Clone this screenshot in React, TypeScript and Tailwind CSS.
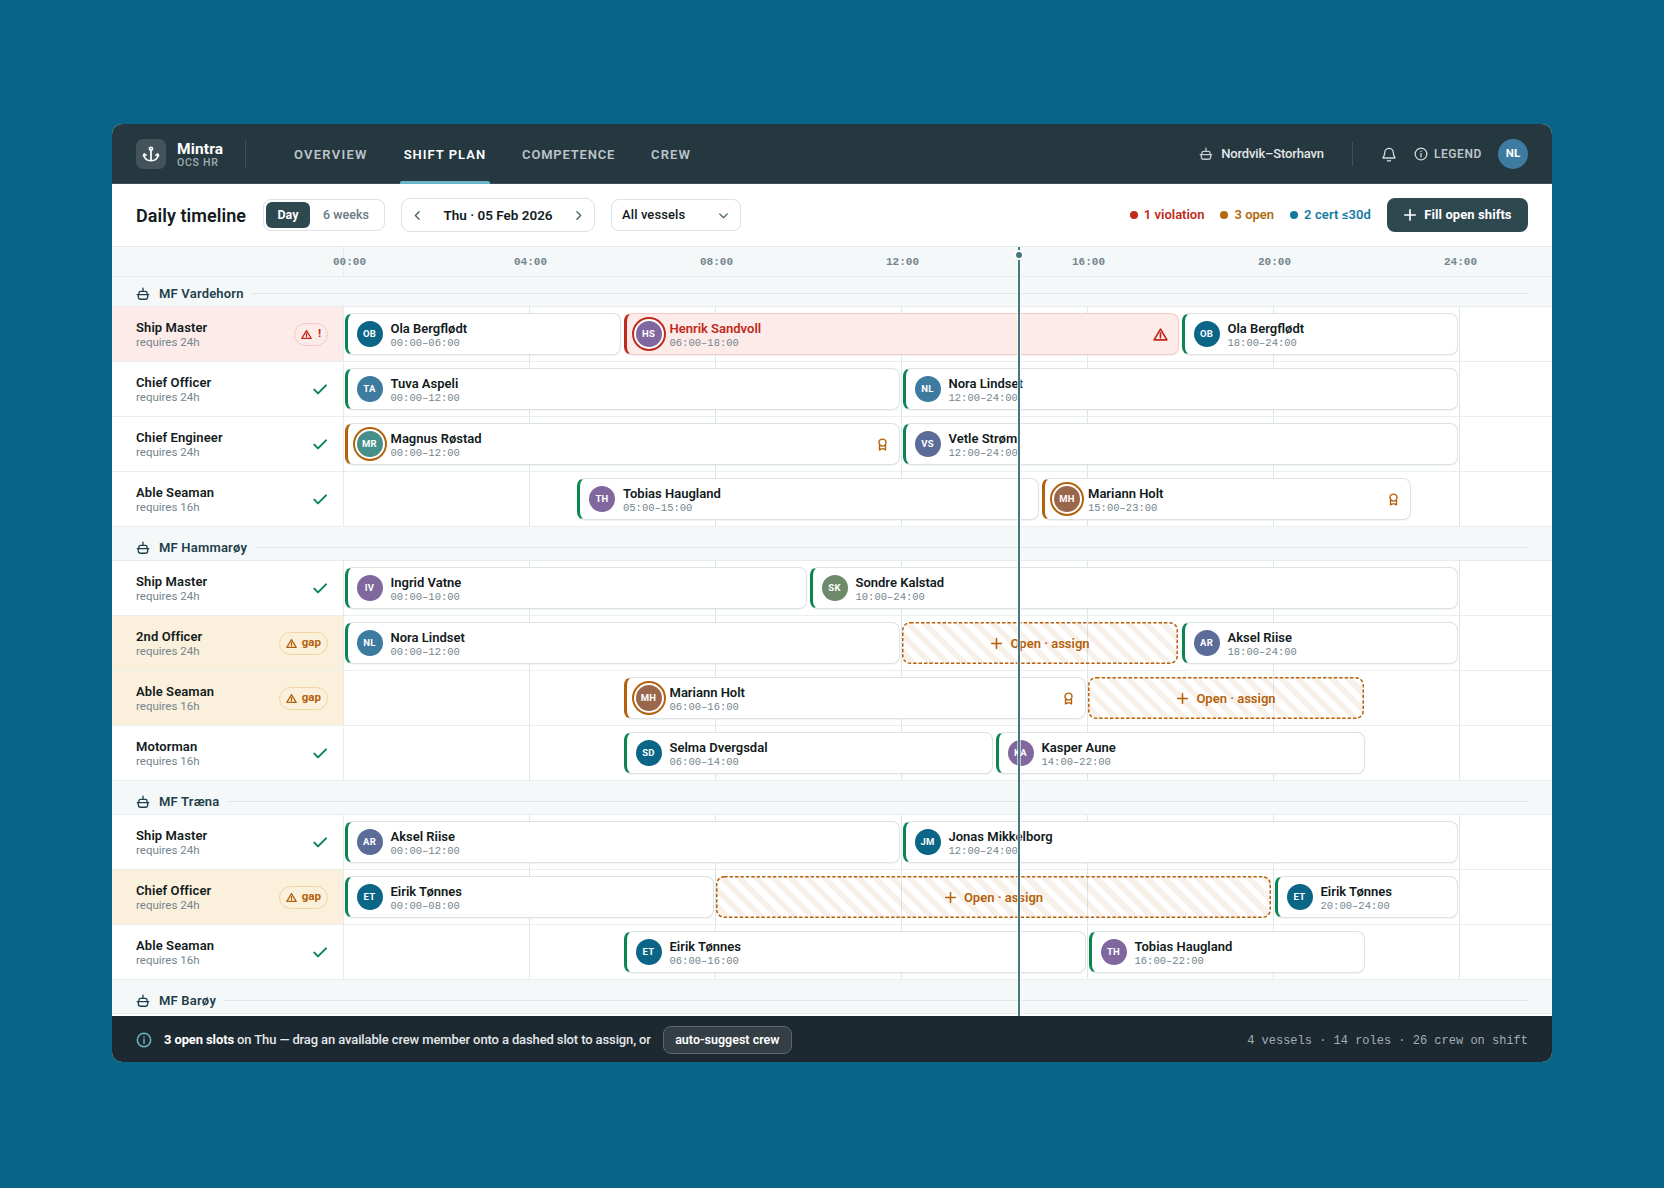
import { ReactNode } from "react";

type Status = "ok" | "cert" | "violation" | "open";

interface Shift {
  name?: string;
  start: number;
  end: number;
  status?: Status;
}

interface Role {
  title: string;
  hours: number;
  state?: "gap" | "violation";
  shifts: Shift[];
}

interface Vessel {
  name: string;
  roles: Role[];
}

const AVATAR_COLORS: Record<string, string> = {
  "Ola Bergflødt": "bg-[#0a6587]",
  "Henrik Sandvoll": "bg-[#80689f]",
  "Tuva Aspeli": "bg-[#3d7ba1]",
  "Nora Lindset": "bg-[#3d7ba1]",
  "Magnus Røstad": "bg-[#458e89]",
  "Vetle Strøm": "bg-[#5b6c99]",
  "Tobias Haugland": "bg-[#80689f]",
  "Mariann Holt": "bg-[#9a674d]",
  "Ingrid Vatne": "bg-[#80689f]",
  "Sondre Kalstad": "bg-[#6d8a6b]",
  "Aksel Riise": "bg-[#5b6c99]",
  "Selma Dvergsdal": "bg-[#0a6587]",
  "Kasper Aune": "bg-[#80689f]",
  "Jonas Mikkelborg": "bg-[#0a6587]",
  "Eirik Tønnes": "bg-[#0a6587]",
};

const VESSELS: Vessel[] = [
  {
    name: "MF Vardehorn",
    roles: [
      {
        title: "Ship Master",
        hours: 24,
        state: "violation",
        shifts: [
          { name: "Ola Bergflødt", start: 0, end: 6 },
          { name: "Henrik Sandvoll", start: 6, end: 18, status: "violation" },
          { name: "Ola Bergflødt", start: 18, end: 24 },
        ],
      },
      {
        title: "Chief Officer",
        hours: 24,
        shifts: [
          { name: "Tuva Aspeli", start: 0, end: 12 },
          { name: "Nora Lindset", start: 12, end: 24 },
        ],
      },
      {
        title: "Chief Engineer",
        hours: 24,
        shifts: [
          { name: "Magnus Røstad", start: 0, end: 12, status: "cert" },
          { name: "Vetle Strøm", start: 12, end: 24 },
        ],
      },
      {
        title: "Able Seaman",
        hours: 16,
        shifts: [
          { name: "Tobias Haugland", start: 5, end: 15 },
          { name: "Mariann Holt", start: 15, end: 23, status: "cert" },
        ],
      },
    ],
  },
  {
    name: "MF Hammarøy",
    roles: [
      {
        title: "Ship Master",
        hours: 24,
        shifts: [
          { name: "Ingrid Vatne", start: 0, end: 10 },
          { name: "Sondre Kalstad", start: 10, end: 24 },
        ],
      },
      {
        title: "2nd Officer",
        hours: 24,
        state: "gap",
        shifts: [
          { name: "Nora Lindset", start: 0, end: 12 },
          { start: 12, end: 18, status: "open" },
          { name: "Aksel Riise", start: 18, end: 24 },
        ],
      },
      {
        title: "Able Seaman",
        hours: 16,
        state: "gap",
        shifts: [
          { name: "Mariann Holt", start: 6, end: 16, status: "cert" },
          { start: 16, end: 22, status: "open" },
        ],
      },
      {
        title: "Motorman",
        hours: 16,
        shifts: [
          { name: "Selma Dvergsdal", start: 6, end: 14 },
          { name: "Kasper Aune", start: 14, end: 22 },
        ],
      },
    ],
  },
  {
    name: "MF Træna",
    roles: [
      {
        title: "Ship Master",
        hours: 24,
        shifts: [
          { name: "Aksel Riise", start: 0, end: 12 },
          { name: "Jonas Mikkelborg", start: 12, end: 24 },
        ],
      },
      {
        title: "Chief Officer",
        hours: 24,
        state: "gap",
        shifts: [
          { name: "Eirik Tønnes", start: 0, end: 8 },
          { start: 8, end: 20, status: "open" },
          { name: "Eirik Tønnes", start: 20, end: 24 },
        ],
      },
      {
        title: "Able Seaman",
        hours: 16,
        shifts: [
          { name: "Eirik Tønnes", start: 6, end: 16 },
          { name: "Tobias Haugland", start: 16, end: 22 },
        ],
      },
    ],
  },
  { name: "MF Barøy", roles: [] },
];

const clock = (h: number) => `${String(h).padStart(2, "0")}:00`;
const initials = (name: string) => name.split(" ").map((p) => p[0]).join("");

function Icon({ size, width = 2, className = "", children }: { size: number; width?: number; className?: string; children: ReactNode }) {
  return (
    <svg
      width={size}
      height={size}
      viewBox="0 0 24 24"
      fill="none"
      stroke="currentColor"
      strokeWidth={width}
      strokeLinecap="round"
      strokeLinejoin="round"
      className={`shrink-0 ${className}`}
    >
      {children}
    </svg>
  );
}

const ShipIcon = ({ className }: { className?: string }) => (
  <Icon size={14} width={2.3} className={className}>
    <path d="M12 2v5.500M5 13v-2.500a3 3 0 0 1 3-3h8a3 3 0 0 1 3 3V13M2 13h20M4 13v4a4 4 0 0 0 4 4h8a4 4 0 0 0 4-4v-4" />
  </Icon>
);

const WarnIcon = ({ size }: { size: number }) => (
  <Icon size={size} width={2.7}>
    <path d="M12 3.500 1.800 20.500h20.400L12 3.500ZM12 9.500v7.500" />
  </Icon>
);

const InfoIcon = ({ size, className }: { size: number; className?: string }) => (
  <Icon size={size} width={2.2} className={className}>
    <circle cx="12" cy="12" r="10" />
    <path d="M12 11v6M12 7.200v.3" />
  </Icon>
);

const AwardIcon = () => (
  <Icon size={13} width={2.6} className="text-[#b4610b]">
    <circle cx="12" cy="8.500" r="6.500" />
    <path d="M6.500 13.500V22l3.300-2h4.400l3.300 2v-8.500" />
  </Icon>
);

const PlusIcon = ({ size }: { size: number }) => (
  <Icon size={size} width={2.8}>
    <path d="M12 3v18M3 12h18" />
  </Icon>
);

function Avatar({ name, ring }: { name: string; ring?: string }) {
  return (
    <span
      className={`flex size-[26px] shrink-0 items-center justify-center rounded-full pt-px text-[9.5px] font-bold tracking-[0.3px] text-white ${AVATAR_COLORS[name]} ${ring ?? ""}`}
    >
      {initials(name)}
    </span>
  );
}

function ShiftBlock({ shift }: { shift: Shift }) {
  const { name, start, end, status = "ok" } = shift;
  const gridColumn = `${start + 1} / ${end + 1}`;

  if (status === "open" || !name) {
    return (
      <div
        style={{ gridColumn }}
        className="relative row-start-1 mr-[3px] flex items-center justify-center gap-[7px] rounded-lg bg-[repeating-linear-gradient(45deg,transparent_0_6px,rgba(180,97,11,0.09)_6px_12px)] pt-px text-[13px] font-semibold text-[#b4610b]"
      >
        {/* Dashed outline */}
        <svg className="absolute inset-0 size-full" fill="none" stroke="currentColor" strokeWidth="1.5" strokeDasharray="3.4 2">
          <rect x="0.75" y="0.75" rx="7.5" className="h-[calc(100%-1.5px)] w-[calc(100%-1.5px)]" />
        </svg>
        <PlusIcon size={13} />
        Open · assign
      </div>
    );
  }

  const skin = {
    ok: "border-[#dbe3e5] border-l-[#0b8550] bg-white",
    cert: "border-[#dbe3e5] border-l-[#b4610b] bg-white",
    violation: "border-[#f3cac5] border-l-[#bf2a1c] bg-[#fcebe9]",
    open: "",
  }[status];
  const ring = {
    ok: "",
    cert: "shadow-[0_0_0_2px_#fff,0_0_0_4px_#b4610b]",
    violation: "shadow-[0_0_0_2px_#fff,0_0_0_4px_#bf2a1c]",
    open: "",
  }[status];

  return (
    <div
      style={{ gridColumn }}
      className={`row-start-1 mr-[2.5px] ml-[0.5px] flex min-w-0 items-center gap-2 rounded-lg border border-l-[3px] pr-[10px] pl-[9px] shadow-[0_1px_1px_rgba(30,50,60,0.06)] ${skin}`}
    >
      <Avatar name={name} ring={ring} />
      <div className="min-w-0 flex-1 pt-[2px]">
        <div className={`text-[13px] leading-[15px] font-semibold whitespace-nowrap ${status === "violation" ? "text-[#bf2a1c]" : "text-[#121b20]"}`}>
          {name}
        </div>
        <div className="font-['Liberation_Mono',monospace] text-[10.5px] leading-[14px] text-[#73858d]">
          {clock(start)}–{clock(end)}
        </div>
      </div>
      {status === "cert" && <AwardIcon />}
      {status === "violation" && (
        <span className="text-[#bf2a1c]">
          <WarnIcon size={15} />
        </span>
      )}
    </div>
  );
}

function RoleRow({ role }: { role: Role }) {
  const tint = role.state === "violation" ? "bg-[#fcebe9]" : role.state === "gap" ? "bg-[#fbf0dc]" : "bg-white";

  return (
    <div className="flex h-[55px] shrink-0 border-b border-[#e9eeef]">
      <div className={`flex w-[232px] shrink-0 items-center justify-between border-r border-[#e6ecee] pr-[15px] pl-6 ${tint}`}>
        <div className="pt-px">
          <div className="text-[13px] leading-[16px] font-semibold tracking-[0.1px] text-[#121b20]">{role.title}</div>
          <div className="text-[11.5px] leading-[13px] text-[#73858d]">requires {role.hours}h</div>
        </div>
        {!role.state && (
          <Icon size={16} width={3} className="text-[#0b8550]">
            <path d="M3.500 13l5.500 5.500L21 6.500" />
          </Icon>
        )}
        {role.state === "gap" && (
          <span className="flex h-[23px] items-center gap-[5px] rounded-full border border-[#f0d6a2] px-[6px] text-[11.5px] font-bold text-[#b4610b]">
            <WarnIcon size={11} />
            gap
          </span>
        )}
        {role.state === "violation" && (
          <span className="flex h-[23px] items-center gap-[6px] rounded-full border border-[#f3cac5] px-[6px] text-[11.5px] font-bold text-[#bf2a1c]">
            <WarnIcon size={11} />
            !
          </span>
        )}
      </div>
      <div className="grid flex-1 grid-cols-[repeat(24,46.5px)] bg-[linear-gradient(to_left,#dfe6e8_1px,transparent_1px)] bg-[length:186px_100%] py-[6px]">
        {role.shifts.map((s) => (
          <ShiftBlock key={s.start} shift={s} />
        ))}
      </div>
    </div>
  );
}

function VesselHeader({ name, first }: { name: string; first: boolean }) {
  return (
    <div className={`flex shrink-0 items-center border-b border-[#e6ecee] bg-[#f4f8f9] px-6 text-[#1f3f4b] ${first ? "h-[30px] pt-[3px]" : "h-[34px] pt-[7px]"}`}>
      <ShipIcon className="mt-[2px]" />
      <span className="ml-[9px] pt-[2px] text-[13px] font-semibold tracking-[0.2px]">{name}</span>
      <span className="ml-2 h-px flex-1 bg-[#e1e8ea]" />
    </div>
  );
}

function Stat({ dot, text, children }: { dot: string; text: string; children: ReactNode }) {
  return (
    <span className={`flex items-center gap-[6px] text-[13px] font-semibold ${text}`}>
      <span className={`size-2 rounded-full ${dot}`} />
      {children}
    </span>
  );
}

function TopBar() {
  return (
    <header className="flex h-[60px] shrink-0 items-center border-b border-[#3d4f57] bg-[#25373f] px-6 text-white">
      <span className="flex size-[30px] items-center justify-center rounded-[7px] bg-[#44535a]">
        <Icon size={18} width={2.3}>
          <circle cx="12" cy="5" r="2" />
          <path d="M12 7v14M2.500 13c.7 5 4.500 8 9.500 8s8.800-3 9.500-8M2 14.500l1-2.500 2.500 1.500M22 14.500 21 12l-2.500 1.500" />
        </Icon>
      </span>
      <div className="ml-[11px] w-[68px] pt-[2px]">
        <div className="text-[15.5px] leading-[16px] font-bold tracking-[0.15px]">Mintra</div>
        <div className="text-[10.5px] leading-[12px] font-medium tracking-[0.75px] text-[#a3adb1]">OCS HR</div>
      </div>
      <span className="h-[30px] w-px bg-[#3d4f57]" />
      <nav className="ml-[44px] flex h-full gap-7 text-[13px] font-semibold tracking-[0.9px] text-[#bdc5c8]">
        <a className="flex items-center px-1 pt-[2px] tracking-[1.25px]">OVERVIEW</a>
        <a className="relative flex items-center px-1 pt-[2px] tracking-[1px] text-white">
          SHIFT PLAN
          <span className="absolute inset-x-0 -bottom-px h-[3px] rounded-t-[2px] bg-[#6cb4c8]" />
        </a>
        <a className="flex items-center px-1 pt-[2px] tracking-[0.8px]">COMPETENCE</a>
        <a className="flex items-center px-1 pt-[2px] tracking-[1.1px]">CREW</a>
      </nav>
      <div className="ml-auto flex items-center">
        <ShipIcon className="text-[#c4cbce]" />
        <span className="ml-2 pt-px text-[13px] font-medium tracking-[-0.15px] text-[#e2e6e8]">Nordvik–Storhavn</span>
        <span className="ml-7 h-6 w-px bg-[#3d4f57]" />
        <Icon size={16} width={2} className="ml-7 text-[#d3d8da]">
          <path d="M5.500 10a6.500 6.500 0 0 1 13 0c0 5 2.500 6.500 2.500 8H3c0-1.500 2.500-3 2.500-8ZM9.800 21.500a2.600 2.600 0 0 0 4.400 0" />
        </Icon>
        <InfoIcon size={14} className="ml-[17px] text-[#d3d8da]" />
        <span className="ml-[6px] pt-px text-xs font-semibold tracking-[0.6px] text-[#bdc5c8]">LEGEND</span>
        <span className="ml-4 flex size-[30px] items-center justify-center rounded-full bg-[#3d7ba1] pt-px text-[11.5px] font-bold">NL</span>
      </div>
    </header>
  );
}

function Toolbar() {
  return (
    <div className="flex h-[63px] shrink-0 items-center border-b border-[#e6ecee] bg-white px-6">
      <h1 className="text-[18px] font-semibold tracking-[0.05px] text-[#121b20]">Daily timeline</h1>
      <div className="ml-[17px] flex h-8 w-[122px] items-center rounded-lg border border-[#dbe3e5] p-[2px] text-[12.5px]">
        <span className="flex h-[26px] w-[44px] items-center justify-center rounded-md bg-[#2e4850] font-bold text-white">Day</span>
        <span className="flex-1 text-center font-medium tracking-[0.05px] text-[#667a83]">6 weeks</span>
      </div>
      <div className="ml-4 flex h-[34px] w-[194px] items-center justify-between rounded-[9px] border border-[#dbe3e5] px-[9px] text-[#44606b]">
        <Icon size={13} width={2.4}>
          <path d="M15 5l-7 7 7 7" />
        </Icon>
        <span className="text-[13.5px] font-semibold text-[#121b20]">Thu · 05 Feb 2026</span>
        <Icon size={13} width={2.4}>
          <path d="M9 5l7 7-7 7" />
        </Icon>
      </div>
      <div className="ml-4 flex h-8 w-[130px] items-center justify-between rounded-lg border border-[#dbe3e5] px-[10px] text-[#44606b]">
        <span className="text-[13px] font-medium tracking-[0.1px] text-[#121b20]">All vessels</span>
        <Icon size={13} width={2.4}>
          <path d="M5 9l7 7 7-7" />
        </Icon>
      </div>
      <div className="ml-auto flex items-center gap-4">
        <Stat dot="bg-[#bf2a1c]" text="text-[#bf2a1c]">1 violation</Stat>
        <Stat dot="bg-[#b06a0c]" text="text-[#b06a0c]">3 open</Stat>
        <Stat dot="bg-[#137a9f]" text="text-[#137a9f] tracking-[0.1px]">2 cert ≤30d</Stat>
        <button className="flex h-[34px] w-[141px] items-center justify-center gap-[7px] rounded-lg bg-[#2e4850] text-[13px] font-bold tracking-[0.08px] text-white">
          <PlusIcon size={14} />
          Fill open shifts
        </button>
      </div>
    </div>
  );
}

function Axis() {
  return (
    <div className="flex h-[30px] shrink-0 border-b border-[#e6ecee] bg-[#f4f8f9]">
      <div className="w-[232px] shrink-0 border-r border-[#e6ecee]" />
      <div className="grid flex-1 grid-cols-[repeat(26,46.5px)] items-center pt-[2px] font-['Liberation_Mono',monospace] text-[11px] font-bold text-[#73858d]">
        {[0, 4, 8, 12, 16, 20, 24].map((h) => (
          <span
            key={h}
            style={{ gridColumn: `${h + 1} / span 2` }}
            className={`row-start-1 w-[33px] ${h === 0 ? "ml-[-11px]" : "ml-[-16px]"}`}
          >
            {clock(h)}
          </span>
        ))}
      </div>
    </div>
  );
}

export default function App() {
  return (
    <div className="flex h-[1188px] w-[1664px] items-start justify-center bg-[#086587] pt-[124px] font-[Roboto,'Liberation_Sans',sans-serif]">
      <div className="flex h-[938px] w-[1440px] flex-col overflow-hidden rounded-[10px] bg-white">
        <TopBar />
        <Toolbar />
        <div className="relative flex min-h-0 flex-1 flex-col overflow-hidden">
          <Axis />
          {VESSELS.map((v, i) => (
            <div key={v.name} className="flex shrink-0 flex-col">
              <VesselHeader name={v.name} first={i === 0} />
              {v.roles.map((r) => (
                <RoleRow key={r.title} role={r} />
              ))}
            </div>
          ))}
          {/* Current time marker */}
          <div className="absolute inset-y-0 left-[906px] w-[2px] bg-[#457682] shadow-[0_0_0_1px_rgba(255,255,255,0.6)]">
            <span className="absolute top-[5px] -left-[2px] size-[6px] rounded-full bg-[#457682] shadow-[0_0_0_2px_#fff]" />
          </div>
        </div>
        <footer className="flex h-[46px] shrink-0 items-center bg-[#1c2930] px-6 text-[13px] text-[#e4e8ea]">
          <InfoIcon size={16} className="mt-px text-[#6cb4c8]" />
          <span className="ml-3 pt-[2px] font-medium tracking-[-0.12px]">
            <b className="font-bold text-white">3 open slots</b> on Thu — drag an available crew member onto a dashed slot to assign, or
          </span>
          <button className="mt-px ml-3 flex h-7 w-[129px] items-center justify-center rounded-lg border border-[#5a676d] bg-[#333f45] pt-px text-[12.5px] font-semibold text-white">
            auto-suggest crew
          </button>
          <span className="ml-auto pt-[3px] font-['Liberation_Mono',monospace] text-xs text-[#a3adb1]">
            4 vessels · 14 roles · 26 crew on shift
          </span>
        </footer>
      </div>
    </div>
  );
}
